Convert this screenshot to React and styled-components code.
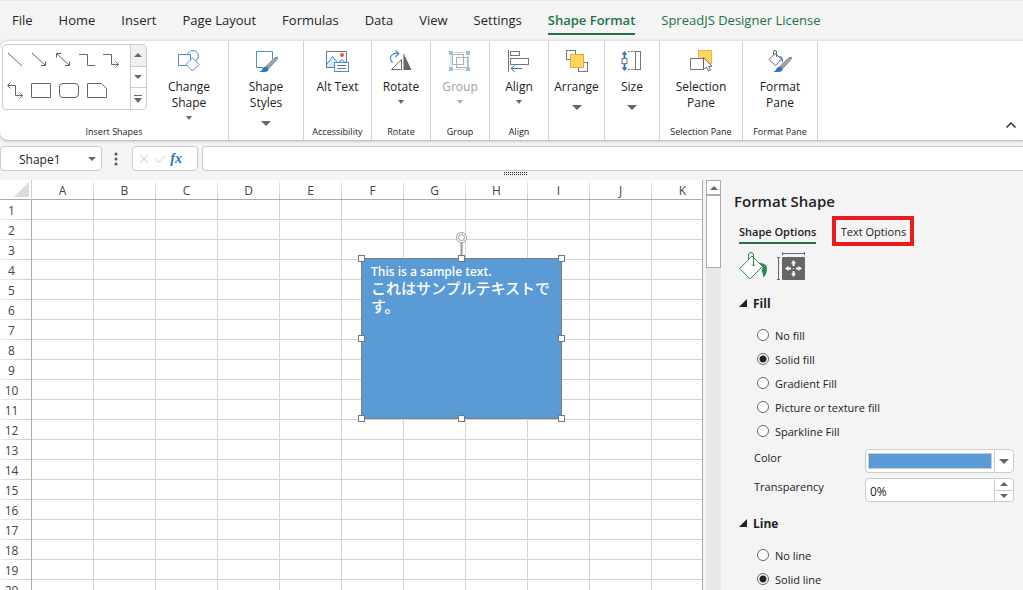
import React, { useState } from 'react'
import styled, { createGlobalStyle } from 'styled-components'

const GlobalStyle = createGlobalStyle`
  * {
    box-sizing: border-box;
  }

  body {
    margin: 0;
    background: #f4f4f4;
    color: #222;
    font-family: 'Open Sans', 'Noto Sans CJK JP', sans-serif;
    font-size: 12px;
  }

  button, input {
    margin: 0;
    padding: 0;
    border: none;
    background: none;
    color: inherit;
    font: inherit;
  }

  svg {
    display: block;
    flex: none;
  }
`

const Page = styled.div`
  display: flex;
  flex-direction: column;
  height: 100vh;
  overflow: hidden;
`

/* menu */
const Menu = styled.nav`
  display: flex;
  gap: 26px;
  height: 40px;
  padding: 6px 12px 0;
  border-top: 1px solid #e6e6e6;
`
const MenuTab = styled.button`
  height: 28px;
  padding-bottom: 1px;
  border-bottom: 2px solid ${props => props.$active ? '#217346' : 'transparent'};
  color: ${props => props.$green ? '#217346' : '#262626'};
  font-size: 13px;
  font-weight: ${props => props.$active ? 600 : 400};
  white-space: nowrap;
`

/* ribbon */
const Ribbon = styled.div`
  display: flex;
  height: 100px;
  flex: none;
  border-top: 1px solid #e3e3e3;
  border-radius: 8px 0 0 8px;
  background: #fff;
  box-shadow: 0 1px 3px rgba(0, 0, 0, 0.3);
`
const Group = styled.section`
  display: flex;
  flex-direction: column;
  align-items: center;
  width: ${props => props.$width}px;
  border-right: 1px solid #d2d2d2;
`
const GroupBody = styled.div`
  display: flex;
  flex: 1;
`
const InsertBody = styled(GroupBody)`
  padding-right: 16px;
`
const GroupTitle = styled.div`
  height: 16px;
  font-size: 9px;
  line-height: 16px;
  white-space: nowrap;
`
const Tool = styled.button`
  display: flex;
  flex-direction: column;
  align-items: center;
  padding-top: 8px;
  font-size: 12px;
  line-height: 16px;
  white-space: pre-line;

  &:disabled {
    color: #a0a0a0;
  }
`
const ToolLabel = styled.span`
  margin-top: 6px;
`
const Caret = styled.span`
  margin-top: ${props => props.$big ? 10 : 5}px;
  border: solid transparent;
  border-width: ${props => props.$big ? '5px 5px 0' : '4px 3px 0'};
  border-top-color: ${props => props.$dim ? '#b0b0b0' : '#666'};
`
const Collapse = styled.button`
  align-self: flex-end;
  margin-left: auto;
  padding: 8px 6px;
`

const Gallery = styled.div`
  display: flex;
  width: 145px;
  height: 66px;
  margin: 3px 21px 0 0;
  border: 1px solid #ccc;
  border-radius: 4px;
  overflow: hidden;
`
const ShapeList = styled.div`
  display: flex;
  flex: 1;
  flex-wrap: wrap;
  align-content: flex-start;
`
const ShapeItem = styled.button`
  display: flex;
  align-items: center;
  justify-content: center;
  width: ${props => props.$wide ? 28 : 24}px;
  height: 30px;
`
const GalleryScroll = styled.div`
  display: flex;
  flex-direction: column;
  width: 16px;
  border-left: 1px solid #ccc;
`
const GalleryButton = styled.button`
  display: flex;
  flex: 1;
  align-items: center;
  justify-content: center;

  &:first-child {
    background: #f0f0f0;
  }

  & + & {
    border-top: 1px solid #ccc;
  }
`

/* formula bar */
const FormulaBar = styled.div`
  display: flex;
  align-items: flex-start;
  flex: none;
  height: 40px;
  padding-top: 6px;
  position: relative;
`
const Box = styled.div`
  display: flex;
  align-items: center;
  height: 25px;
  border: 1px solid #ccc;
  border-radius: 4px;
  background: #fff;
`
const NameBox = styled(Box)`
  width: 102px;
  padding: 0 5px 0 18px;
`
const NameInput = styled.input`
  flex: 1;
  width: 0;
  padding-top: 2px;
  outline: none;
  font-size: 12px;
`
const MoreButton = styled.button`
  display: flex;
  align-items: center;
  justify-content: center;
  width: 28px;
  height: 25px;
  margin-right: 2px;
`
const FormulaActions = styled(Box)`
  justify-content: space-between;
  width: 66px;
  padding: 0 15px 0 6px;
`
const FxButton = styled.button`
  color: #2b72c4;
  font-family: 'Liberation Serif', serif;
  font-size: 14px;
  font-style: italic;
  font-weight: 700;
  line-height: 20px;
`
const FormulaInput = styled.input`
  flex: 1;
  height: 25px;
  margin-left: 4px;
  padding: 0 6px;
  border: 1px solid #ccc;
  border-right: none;
  border-radius: 4px 0 0 4px;
  background: #fff;
  outline: none;
`
const Grip = styled.div`
  position: absolute;
  left: 504px;
  bottom: 5px;
`

/* sheet */
const Main = styled.div`
  display: flex;
  flex: 1;
  min-height: 0;
`
const Sheet = styled.div`
  position: relative;
  flex: 1;
  margin-right: 3px;
  border-right: 1px solid #ababab;
  background: #fff;
  overflow: hidden;
`
const Cells = styled.table`
  width: 714px;
  table-layout: fixed;
  border-collapse: separate;
  border-spacing: 0;
`
const Corner = styled.th`
  width: 32px;
  height: 20px;
  padding: 0 2px 2px 14px;
  border-right: 1px solid #d0d0d0;
  border-bottom: 1px solid #ababab;
  vertical-align: bottom;
`
const ColHead = styled.th`
  height: 20px;
  padding: 2px 1px 0 0;
  border-bottom: 1px solid #ababab;
  background: linear-gradient(#f0f0f0, #c8c8c8) right / 1px 100% no-repeat;
  color: #444;
  font-size: 12px;
  font-weight: 400;
  line-height: 17px;
`
const RowHead = styled.th`
  height: 20px;
  padding: 0 8px 0 0;
  border-right: 1px solid #ababab;
  background: linear-gradient(90deg, #f0f0f0, #c8c8c8) bottom / 100% 1px no-repeat;
  color: #444;
  font-size: 12px;
  font-weight: 400;
  line-height: 19px;
  text-align: center;
`
const Cell = styled.td`
  padding: 0;
  border-right: 1px solid #d4d4d4;
  border-bottom: 1px solid #d4d4d4;
`
const Shape = styled.div`
  position: absolute;
  left: 361px;
  top: 78px;
  width: 201px;
  height: 161px;
  padding: 5px 9px;
  border: 1px solid #7f7f7f;
  background: #5b9bd5;
  color: #fff;
  font-size: 12px;
  font-weight: 600;
  line-height: 15px;
`
const Japanese = styled.div`
  font-family: 'Noto Sans CJK JP', sans-serif;
  font-size: 15px;
  font-weight: 500;
  line-height: 18px;
`
const Selection = styled.div`
  position: absolute;
  inset: 0 -1px -1px 0;
`
const Handle = styled.span`
  position: absolute;
  left: ${props => props.$x}%;
  top: ${props => props.$y}%;
  width: 7px;
  height: 7px;
  margin: -4px 0 0 -4px;
  border: 1px solid #777;
  background: #fff;
`
const RotateHandle = styled.svg`
  position: absolute;
  left: 93px;
  top: -28px;
`
const ScrollBar = styled.div`
  display: flex;
  flex-direction: column;
  width: 15px;
  background: #e8e8e8;
`
const ScrollUp = styled.button`
  display: flex;
  align-items: center;
  justify-content: center;
  height: 15px;
  border: 1px solid #ababab;
  background: #fff;
`
const ScrollThumb = styled.div`
  height: 73px;
  border: 1px solid #ababab;
  background: #fff;
`

/* format panel */
const Panel = styled.aside`
  width: 302px;
  padding: 9px 9px 0 18px;
  overflow: hidden;
`
const PanelTitle = styled.h2`
  margin: 0 0 0 -5px;
  font-size: 15px;
  font-weight: 600;
  line-height: 24px;
`
const PanelTabs = styled.div`
  display: flex;
  gap: 16px;
  margin-top: 3px;
`
const PanelTab = styled.button`
  height: 24px;
  margin: 4px 0 2px;
  border-bottom: 2px solid #217346;
  font-size: 11px;
  font-weight: 600;
  white-space: nowrap;
`
const MarkedTab = styled.button`
  height: 30px;
  width: 82px;
  border: 4px solid #ea1c1f;
  font-size: 11px;
  white-space: nowrap;
`
const PanelIcons = styled.div`
  display: flex;
  gap: 7px;
  margin-top: 5px;
`
const Heading = styled.button`
  display: flex;
  align-items: center;
  gap: 6px;
  height: 20px;
  margin-top: ${props => props.$first ? 12 : 11}px;
  font-size: 12px;
  font-weight: 700;
`
const Radios = styled.div`
  padding: 10px 0 0 18px;
`
const RadioRow = styled.label`
  display: flex;
  align-items: center;
  gap: 6px;
  height: 24px;
  font-size: 11px;
`
const Radio = styled.input`
  appearance: none;
  width: 12px;
  height: 12px;
  border: 1px solid #666;
  border-radius: 50%;
  background: #fff;

  &:checked {
    background: radial-gradient(circle, #222 3px, #fff 4px);
  }
`
const Fields = styled.div`
  display: flex;
  flex-direction: column;
  gap: 5px;
  padding: 6px 0 0 15px;
`
const Field = styled.div`
  display: flex;
  justify-content: space-between;
`
const FieldLabel = styled.label`
  font-size: 11px;
  line-height: 18px;
`
const FieldBox = styled.div`
  display: flex;
  width: 149px;
  height: 24px;
  border: 1px solid #ccc;
  border-radius: 4px;
  background: #fff;
  overflow: hidden;
`
const Swatch = styled.button`
  flex: 1;
  margin: 3px 2px;
  border: 1px solid #ccc;
  background: #5b9bd5;
`
const DropButton = styled.button`
  display: flex;
  align-items: center;
  justify-content: center;
  width: 19px;
  border-left: 1px solid #ccc;
`
const Percent = styled.input`
  flex: 1;
  width: 0;
  padding: 3px 4px 0;
  outline: none;
`
const Spinner = styled.div`
  display: flex;
  flex-direction: column;
  width: 19px;
  border-left: 1px solid #ccc;
`
const SpinButton = styled.button`
  display: flex;
  flex: 1;
  align-items: center;
  justify-content: center;

  & + & {
    border-top: 1px solid #ccc;
  }
`

const Triangle = ({ up, size = 8 }) => (
  <svg width={size} height={size / 2} viewBox="0 0 8 4">
    <path d={up ? 'M0 4L4 0L8 4Z' : 'M0 0H8L4 4Z'} fill="#666" />
  </svg>
)

const Icon = ({ children }) => (
  <svg width="24" height="24" viewBox="0 0 24 24" fill="none" stroke="#777">{children}</svg>
)

const Brush = () => (
  <>
    <path d="M12 17.5L20 9.5Q22 8 23.5 8.5Q23.5 10 22 11.5L14.5 19.5Z" fill="#a5a5a5" stroke="#666" strokeWidth="0.8" />
    <path d="M5.5 22.5Q8.5 21.5 8.5 19.5Q10 17.5 12 17.5L14.5 19.5Q15 23 10 23Q7 23.2 5.5 22.5Z" fill="#2f77c5" stroke="none" />
  </>
)

const ChangeShapeIcon = () => (
  <Icon>
    <g stroke="#4a8fd6" fill="#fff">
      <circle cx="16" cy="7" r="5.5" />
      <rect x="1.5" y="5.5" width="12" height="11" />
      <path d="M15.5 9L22 15.5L15.5 22L9 15.5Z" />
    </g>
  </Icon>
)

const ShapeStylesIcon = () => (
  <Icon>
    <path d="M18.5 10V2.5H2.5V18.5H9" stroke="#4a8fd6" />
    <Brush />
  </Icon>
)

const AltTextIcon = () => (
  <Icon>
    <rect x="1.5" y="2.5" width="20" height="16" fill="#fff" />
    <path d="M2 15L7.5 7.5L13 14L17 10.5L21 14V18H2Z" fill="#d3e8fa" stroke="none" />
    <path d="M2 15L7.5 7.5L13 14L17 10.5L21 14" stroke="#4a8fd6" />
    <circle cx="17" cy="6" r="2" fill="#f05a28" stroke="none" />
    <rect x="9.5" y="13.5" width="14" height="9" fill="#fff" stroke="#4a8fd6" />
    <path d="M12 16.5H21M12 19.5H21" />
  </Icon>
)

const RotateIcon = () => (
  <Icon>
    <path d="M3.5 13.5Q-0.5 9 3 6Q5 3.5 9 4.5M6.500 1.5L9.8 4.5L6.5 8" stroke="#4a8fd6" strokeWidth="1.2" />
    <path d="M2.5 20.5L12.5 10.5V20.5Z" stroke="#666" />
    <path d="M14.5 4V21H22.5Z" fill="#666" stroke="none" />
  </Icon>
)

const GroupIcon = () => (
  <Icon>
    <g stroke="#b0b0b0">
      <rect x="4.5" y="5.5" width="11" height="10" />
      <rect x="8.5" y="8.5" width="11" height="10" />
      <path d="M3 6V18M20.5 6V18M6 3.5H17M6 20.5H17" strokeWidth="0.6" />
    </g>
    <path d="M1 2h4v4h-4zM18 2h4v4h-4zM1 18h4v4h-4zM18 18h4v4h-4z" fill="#9cc1e8" stroke="none" />
  </Icon>
)

const AlignIcon = () => (
  <Icon>
    <path d="M1.5 1V23" />
    <rect x="3.5" y="2.5" width="9" height="4" />
    <rect x="3.5" y="9.5" width="18" height="6" />
    <path d="M15 19.5H4M7.5 16.5L4 19.5L7.5 22.5" stroke="#2f77c5" />
  </Icon>
)

const ArrangeIcon = () => (
  <Icon>
    <rect x="1.5" y="1.5" width="9" height="9" />
    <rect x="13.5" y="13.5" width="9" height="9" />
    <rect x="5.5" y="5.5" width="13" height="13" fill="#ffd75e" stroke="#e8a33d" />
  </Icon>
)

const SizeIcon = () => (
  <Icon>
    <path d="M4.5 4V9M4.5 15V20" stroke="#2f77c5" strokeWidth="2" />
    <path d="M1.5 5.5L4.5 2L7.5 5.5ZM1.5 18.5L4.5 22L7.5 18.5Z" fill="#2f77c5" stroke="none" />
    <rect x="2" y="9.5" width="5" height="5" fill="#fff" />
    <path d="M8 2.5H15M8 20.5H15" strokeDasharray="2 1" />
    <rect x="15.5" y="2.5" width="5" height="18" />
  </Icon>
)

const SelectionIcon = () => (
  <Icon>
    <rect x="9.5" y="1.5" width="13" height="13" fill="#ffd75e" stroke="#f0b152" />
    <rect x="1.5" y="9.5" width="13" height="11" fill="#fff" />
    <path d="M14.500 8.5V20.5L17.5 18L19.5 22L21.5 21L19.7 17.3H23Z" fill="#fff" stroke="#666" />
  </Icon>
)

const FormatPaneIcon = () => (
  <Icon>
    <path d="M1 10.500L7 4.5L13.5 10L7.5 16.5Z" fill="#fff" stroke="#666" />
    <path d="M5.5 6V3Q5.5 1.5 7 1.5Q8.5 1.5 8.5 3V8" stroke="#666" />
    <path d="M11 7Q15.5 6.5 15 14Q13 12 13.5 10Z" fill="#2f77c5" stroke="none" />
    <Brush />
  </Icon>
)

const shapes = [
  { name: 'Line', d: 'M1 1L15 14' },
  { name: 'Arrow', d: 'M1 1L14.5 13.5M14.5 9.5V13.5H10' },
  { name: 'Double arrow', d: 'M1.5 1.5L14.5 13.5M14.5 9.5V13.5H10M1.5 5.5V1.5H6' },
  { name: 'Elbow', d: 'M0 2.5H8.5V13.5H16' },
  { name: 'Elbow arrow', d: 'M0 2.5H8.5V12.5H15.5M12.5 9.5L15.5 12.5L12.5 15.5' },
  { name: 'Elbow double arrow', d: 'M1 3.5H8.5V13.5H15.5M12.5 10.5L15.5 13.5L12.5 16.5M3.5 0.5L0.5 3.5L3.5 6.5' },
  { name: 'Rectangle', wide: true, d: 'M0.5 0.5H19.5V14.5H0.5Z' },
  { name: 'Rounded rectangle', wide: true, d: 'M4 0.5H16Q19.5 0.5 19.5 4V11Q19.5 14.5 16 14.5H4Q0.5 14.5 0.5 11V4Q0.5 0.5 4 0.5Z' },
  { name: 'Snipped rectangle', wide: true, d: 'M0.5 0.5H14.5L19.5 5.5V14.5H0.5Z' },
]

const tools = [
  { label: 'Shape\nStyles', icon: ShapeStylesIcon, caret: 'big', width: 75 },
  { label: 'Alt Text', icon: AltTextIcon, title: 'Accessibility', width: 68 },
  { label: 'Rotate', icon: RotateIcon, caret: 'small', title: 'Rotate', width: 59 },
  { label: 'Group', icon: GroupIcon, caret: 'small', title: 'Group', width: 59, disabled: true },
  { label: 'Align', icon: AlignIcon, caret: 'small', title: 'Align', width: 59 },
  { label: 'Arrange', icon: ArrangeIcon, caret: 'big', width: 56 },
  { label: 'Size', icon: SizeIcon, caret: 'big', width: 55 },
  { label: 'Selection\nPane', icon: SelectionIcon, title: 'Selection Pane', width: 83 },
  { label: 'Format\nPane', icon: FormatPaneIcon, title: 'Format Pane', width: 75 },
]

const menu = ['File', 'Home', 'Insert', 'Page Layout', 'Formulas', 'Data', 'View', 'Settings', 'Shape Format', 'SpreadJS Designer License']
const columns = 'ABCDEFGHIJK'.split('')
const rows = Array.from({ length: 20 }, (_, i) => i + 1)
const handles = [[0, 0], [50, 0], [100, 0], [0, 50], [100, 50], [0, 100], [50, 100], [100, 100]]

const ToolButton = ({ tool }) => (
  <Tool disabled={tool.disabled}>
    <tool.icon />
    <ToolLabel>{tool.label}</ToolLabel>
    {tool.caret && <Caret $big={tool.caret === 'big'} $dim={tool.disabled} />}
  </Tool>
)

const InsertShapes = () => (
  <Group $width={229}>
    <InsertBody>
      <Gallery>
        <ShapeList>
          {shapes.map(shape =>
            <ShapeItem key={shape.name} $wide={shape.wide} aria-label={shape.name}>
              <svg width={shape.wide ? 20 : 16} height={shape.wide ? 15 : 17} fill="none" stroke="#666">
                <path d={shape.d} />
              </svg>
            </ShapeItem>
          )}
        </ShapeList>
        <GalleryScroll>
          <GalleryButton aria-label="Previous shapes"><Triangle up /></GalleryButton>
          <GalleryButton aria-label="Next shapes"><Triangle /></GalleryButton>
          <GalleryButton aria-label="All shapes">
            <svg width="8" height="8"><path d="M0 0H8V1H0ZM0 3H8L4 8Z" fill="#666" /></svg>
          </GalleryButton>
        </GalleryScroll>
      </Gallery>
      <ToolButton tool={{ label: 'Change\nShape', icon: ChangeShapeIcon, caret: 'small' }} />
    </InsertBody>
    <GroupTitle>Insert Shapes</GroupTitle>
  </Group>
)

const SheetView = () => (
  <Sheet>
    <Cells>
      <thead>
        <tr>
          <Corner aria-label="Select all">
            <svg width="15" height="15"><path d="M15 0V15H0Z" fill="#dcdcdc" /></svg>
          </Corner>
          {columns.map(column => <ColHead key={column}>{column}</ColHead>)}
        </tr>
      </thead>
      <tbody>
        {rows.map(row =>
          <tr key={row}>
            <RowHead>{row}</RowHead>
            {columns.map(column => <Cell key={column} />)}
          </tr>
        )}
      </tbody>
    </Cells>
    <Shape>
      <div>This is a sample text.</div>
      <Japanese lang="ja">これはサンプルテキストです。</Japanese>
      <Selection>
        <RotateHandle width="13" height="26" fill="none" stroke="#999">
          <path d="M6.500 11V26" strokeWidth="2" />
          <circle cx="6.5" cy="6.5" r="5" fill="#fff" />
          <circle cx="6.5" cy="6.5" r="3" />
        </RotateHandle>
        {handles.map(([x, y]) => <Handle key={`${x}-${y}`} $x={x} $y={y} />)}
      </Selection>
    </Shape>
  </Sheet>
)

const RadioGroup = ({ name, options, value, onChange }) => (
  <Radios role="radiogroup" aria-label={name}>
    {options.map(option =>
      <RadioRow key={option}>
        <Radio type="radio" name={name} checked={option === value} onChange={() => onChange(option)} />
        {option}
      </RadioRow>
    )}
  </Radios>
)

const SectionHeading = ({ first, children }) => (
  <Heading $first={first}>
    <svg width="8" height="8"><path d="M8 0V8H0Z" fill="#222" /></svg>
    {children}
  </Heading>
)

const FormatPanel = () => {
  const [fill, setFill] = useState('Solid fill')
  const [line, setLine] = useState('Solid line')

  return (
    <Panel>
      <PanelTitle>Format Shape</PanelTitle>
      <PanelTabs>
        <PanelTab>Shape Options</PanelTab>
        <MarkedTab>Text Options</MarkedTab>
      </PanelTabs>
      <PanelIcons>
        <button aria-label="Fill and line">
          <svg width="30" height="30" fill="none" stroke="#2e8b57">
            <path d="M0.8 17.5L13 5L23.5 15.5L11 28Z" fill="#fff" />
            <path d="M9.5 9V4Q9.5 1.5 12 1.5Q14.5 1.5 14.5 4V15M13 13.5L14.5 15L16 13.5" />
            <path d="M19 11.5Q28 12 28 18Q28 23 24.5 26.5Q23.5 21 22.5 19.5L24 15.5Z" fill="#2e8b57" stroke="none" />
          </svg>
        </button>
        <button aria-label="Size and properties">
          <svg width="30" height="30" fill="none" stroke="#666">
            <path d="M6 2.5H28M6.5 1V4M28.5 1V4M2.5 6V28M1 6.5H4M1 28.5H4" />
            <rect x="6" y="6" width="23" height="23" rx="1" fill="#666" stroke="none" />
            <path d="M17.5 11V15M17.5 20V24M11 17.5H15M20 17.5H24" stroke="#fff" strokeWidth="2" />
            <path d="M15 12.5L17.5 9L20 12.5ZM15 22.5L17.5 26L20 22.5ZM12.5 15L9 17.5L12.5 20ZM22.5 15L26 17.5L22.5 20Z" fill="#fff" stroke="none" />
            <path d="M17 17h1v1h-1z" fill="#fff" stroke="none" />
          </svg>
        </button>
      </PanelIcons>
      <SectionHeading first>Fill</SectionHeading>
      <RadioGroup
        name="Fill"
        options={['No fill', 'Solid fill', 'Gradient Fill', 'Picture or texture fill', 'Sparkline Fill']}
        value={fill}
        onChange={setFill}
      />
      <Fields>
        <Field>
          <FieldLabel htmlFor="color">Color</FieldLabel>
          <FieldBox>
            <Swatch id="color" />
            <DropButton aria-label="Pick a color"><Triangle size={10} /></DropButton>
          </FieldBox>
        </Field>
        <Field>
          <FieldLabel htmlFor="transparency">Transparency</FieldLabel>
          <FieldBox>
            <Percent id="transparency" defaultValue="0%" />
            <Spinner>
              <SpinButton aria-label="Increase"><Triangle up /></SpinButton>
              <SpinButton aria-label="Decrease"><Triangle /></SpinButton>
            </Spinner>
          </FieldBox>
        </Field>
      </Fields>
      <SectionHeading>Line</SectionHeading>
      <RadioGroup name="Line" options={['No line', 'Solid line']} value={line} onChange={setLine} />
    </Panel>
  )
}

const App = () => {
  return (
    <Page>
      <GlobalStyle />
      <Menu>
        {menu.map(item =>
          <MenuTab key={item} $active={item === 'Shape Format'} $green={item.startsWith('S') && item !== 'Settings'}>
            {item}
          </MenuTab>
        )}
      </Menu>
      <Ribbon>
        <InsertShapes />
        {tools.map(tool =>
          <Group key={tool.label} $width={tool.width}>
            <GroupBody><ToolButton tool={tool} /></GroupBody>
            {tool.title && <GroupTitle>{tool.title}</GroupTitle>}
          </Group>
        )}
        <Collapse aria-label="Collapse ribbon">
          <svg width="12" height="12" fill="none" stroke="#333" strokeWidth="1.5">
            <path d="M1.5 7.5L6 3L10.5 7.5" />
          </svg>
        </Collapse>
      </Ribbon>
      <FormulaBar>
        <NameBox>
          <NameInput aria-label="Name box" defaultValue="Shape1" />
          <button aria-label="Names"><Triangle /></button>
        </NameBox>
        <MoreButton aria-label="More">
          <svg width="4" height="14" fill="#555">
            <circle cx="2" cy="2" r="1.5" />
            <circle cx="2" cy="7" r="1.5" />
            <circle cx="2" cy="12" r="1.5" />
          </svg>
        </MoreButton>
        <FormulaActions>
          <button aria-label="Cancel">
            <svg width="10" height="10" fill="none" stroke="#ccc"><path d="M1 1L9 9M9 1L1 9" /></svg>
          </button>
          <button aria-label="Enter">
            <svg width="12" height="10" fill="none" stroke="#ccc"><path d="M1 5L4.5 8.5L11.5 1" /></svg>
          </button>
          <FxButton aria-label="Insert function">fx</FxButton>
        </FormulaActions>
        <FormulaInput aria-label="Formula" />
        <Grip>
          <svg width="24" height="3" stroke="#222" strokeDasharray="1 1">
            <path d="M0 0.5H24M0 2.5H24" />
          </svg>
        </Grip>
      </FormulaBar>
      <Main>
        <SheetView />
        <ScrollBar>
          <ScrollUp aria-label="Scroll up"><Triangle up /></ScrollUp>
          <ScrollThumb />
        </ScrollBar>
        <FormatPanel />
      </Main>
    </Page>
  )
}

export default App
